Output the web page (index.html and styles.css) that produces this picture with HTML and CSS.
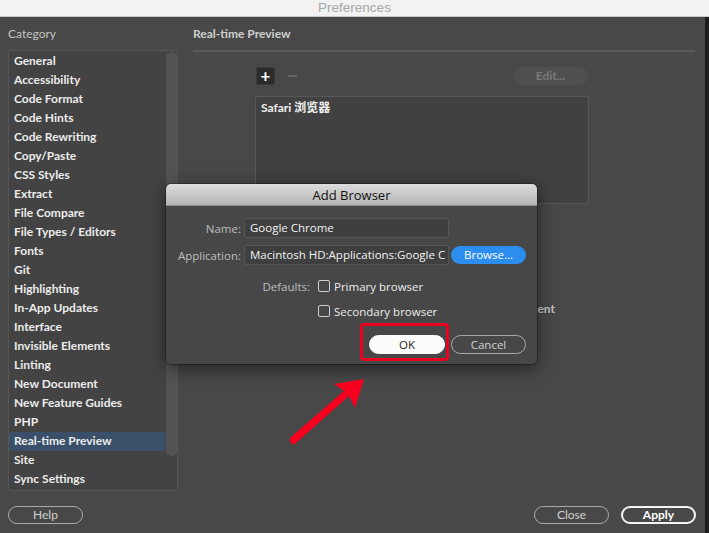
FILE: index.html
```html
<!DOCTYPE html>
<html>
<head>
<meta charset="utf-8">
<title>Preferences</title>
<link rel="stylesheet" href="styles.css">
</head>
<body>
<div class="window">
  <div class="titlebar">Preferences</div>
  <div class="content">
    <div class="main">
      <div class="sidebar">
        <div class="heading">Category</div>
        <div class="listbox">
          <ul class="cats">
            <li>General</li>
            <li>Accessibility</li>
            <li>Code Format</li>
            <li>Code Hints</li>
            <li>Code Rewriting</li>
            <li>Copy/Paste</li>
            <li>CSS Styles</li>
            <li>Extract</li>
            <li>File Compare</li>
            <li>File Types / Editors</li>
            <li>Fonts</li>
            <li>Git</li>
            <li>Highlighting</li>
            <li>In-App Updates</li>
            <li>Interface</li>
            <li>Invisible Elements</li>
            <li>Linting</li>
            <li>New Document</li>
            <li>New Feature Guides</li>
            <li>PHP</li>
            <li class="selected">Real-time Preview</li>
            <li>Site</li>
            <li>Sync Settings</li>
          </ul>
          <div class="scrollbar"></div>
        </div>
      </div>
      <div class="panel">
        <div class="heading">Real-time Preview</div>
        <div class="rule"></div>
        <div class="toolbar">
          <span class="btn-plus">+</span>
          <span class="btn-minus"></span>
          <span class="btn-edit">Edit...</span>
        </div>
        <div class="browsers">
          <div class="browser-item">Safari 浏览器</div>
        </div>
        <div class="hidden-row">current document</div>
      </div>
    </div>
    <div class="footer">
      <span class="pill">Help</span>
      <span class="spacer"></span>
      <span class="pill">Close</span>
      <span class="pill primary">Apply</span>
    </div>
  </div>

  <div class="dialog">
    <div class="dlg-title">Add Browser</div>
    <div class="dlg-body">
      <div class="form-row first">
        <span class="lbl">Name:</span>
        <span class="field">Google Chrome</span>
      </div>
      <div class="form-row">
        <span class="lbl">Application:</span>
        <span class="field">Macintosh HD:Applications:Google C</span>
        <span class="btn-browse">Browse...</span>
      </div>
      <div class="check-row first">
        <span class="lbl2">Defaults:</span>
        <span class="checkbox"></span>
        <span class="check-text">Primary browser</span>
      </div>
      <div class="check-row">
        <span class="lbl2"></span>
        <span class="checkbox"></span>
        <span class="check-text">Secondary browser</span>
      </div>
      <div class="dlg-buttons">
        <span class="dbtn ok">OK</span>
        <span class="dbtn cancel">Cancel</span>
      </div>
    </div>
  </div>

  <div class="highlight"></div>
  <svg class="arrow" width="90" height="80" viewBox="0 0 90 80">
    <path d="M76 1 L46 6 L56 13 L3 59 Q0 63 4 66 Q7 67 9 64 L61 18 L67 30 Z" fill="#f5001e"/>
  </svg>
</div>
</body>
</html>
```

FILE: styles.css
```css
* { box-sizing: border-box; }
html, body { margin: 0; padding: 0; }
body {
  width: 709px;
  height: 533px;
  overflow: hidden;
  background: #484848;
  font-family: "Lato", "Open Sans", sans-serif;
}
.window {
  position: relative;
  width: 709px;
  height: 533px;
  display: flex;
  flex-direction: column;
}
.titlebar {
  height: 17px;
  background: #f2f2f2;
  border-bottom: 1px solid #c9c9c9;
  color: #a6a6a6;
  font-family: "Liberation Sans", Arial, sans-serif;
  font-size: 13.5px;
  line-height: 15px;
  text-align: center;
  flex: none;
}
.content {
  flex: 1;
  display: flex;
  flex-direction: column;
  border-right: 4px solid #1c1c1c;
  background: #484848;
}
.main {
  display: flex;
  flex: 1;
}
.heading {
  color: #c4c4c4;
  font-size: 12px;
  line-height: 16px;
  padding-top: 9px;
  height: 33px;
}
.sidebar {
  width: 193px;
  flex: none;
  padding-left: 8px;
}
.listbox {
  position: relative;
  width: 170px;
  height: 441px;
  background: #434343;
  border: 1px solid #565656;
  border-radius: 2px;
  padding-top: 1px;
}
.cats {
  list-style: none;
  margin: 0;
  padding: 0;
  width: 156px;
}
.cats li {
  height: 19px;
  line-height: 18px;
  padding-left: 5px;
  color: #ececec;
  font-size: 12px;
  font-weight: 700;
  white-space: nowrap;
}
.cats li.selected {
  background: #3a5069;
}
.scrollbar {
  position: absolute;
  top: 1px;
  right: 0px;
  width: 11px;
  height: 404px;
  border-radius: 5px;
  background: #535353;
}
.panel {
  flex: 1;
  padding-right: 10px;
}
.panel .heading { font-weight: 700; color: #cfcfcf; }
.rule {
  height: 2px;
  background: #5a5a5a;
}
.toolbar {
  display: flex;
  align-items: center;
  height: 18px;
  margin-top: 15px;
  padding-left: 63px;
}
.btn-plus {
  width: 19px;
  height: 18px;
  background: #2b2b2b;
  border: 1px solid #3a3a3a;
  border-radius: 2px;
  color: #fff;
  font-weight: 700;
  font-size: 17px;
  line-height: 15px;
  text-align: center;
}
.btn-minus {
  width: 9px;
  height: 2px;
  background: #626262;
  margin-left: 13px;
}
.btn-edit {
  margin-left: auto;
  margin-right: 107px;
  width: 75px;
  height: 18px;
  border-radius: 9px;
  background: #4f4f4f;
  color: #7a7a7a;
  font-size: 12px;
  line-height: 18px;
  text-align: center;
  font-weight: 700;
}
.browsers {
  margin-top: 11px;
  margin-left: 62px;
  width: 334px;
  height: 108px;
  background: #414141;
  border: 1px solid #575757;
  border-radius: 2px;
  padding: 3px 5px;
}
.browser-item {
  color: #f0f0f0;
  font-size: 12px;
  font-weight: 700;
  line-height: 16px;
  font-family: "Lato", "Noto Sans CJK SC", sans-serif;
}
.hidden-row {
  width: 362px;
  text-align: right;
  margin-top: 98px;
  color: #c2c2c2;
  font-size: 12px;
  font-weight: 700;
  line-height: 14px;
}
.footer {
  height: 36px;
  flex: none;
  display: flex;
  align-items: flex-start;
  padding: 9px 9px 0 8px;
  gap: 12px;
}
.spacer { flex: 1; }
.pill {
  width: 75px;
  height: 18px;
  border: 1px solid #a9a9a9;
  border-radius: 9px;
  color: #d0d0d0;
  font-size: 12px;
  line-height: 16px;
  text-align: center;
}
.pill.primary {
  border: 2px solid #f4f4f4;
  color: #fff;
  font-weight: 700;
  line-height: 14px;
}

/* dialog */
.dialog {
  position: absolute;
  left: 166px;
  top: 184px;
  width: 371px;
  height: 180px;
  border-radius: 5px;
  background: #474747;
  box-shadow: 0 4px 18px rgba(0,0,0,0.55), 0 0 0 1px rgba(0,0,0,0.25);
  overflow: hidden;
  font-family: "Open Sans", "DejaVu Sans", sans-serif;
}
.dlg-title {
  height: 22px;
  background: linear-gradient(#dcdcdc, #b4b4b4);
  border-bottom: 1px solid #8a8a8a;
  color: #111;
  font-size: 13px;
  line-height: 23px;
  text-align: center;
}
.form-row {
  display: flex;
  align-items: center;
  height: 20px;
  margin-top: 7px;
}
.form-row.first { margin-top: 12px; }
.lbl {
  width: 75px;
  text-align: right;
  color: #bdbdbd;
  font-size: 11.5px;
  margin-right: 3px;
}
.field {
  width: 205px;
  height: 20px;
  background: #3f3f3f;
  border: 1px solid #565656;
  border-radius: 2px;
  color: #f2f2f2;
  font-size: 11.5px;
  line-height: 18px;
  padding-left: 5px;
  overflow: hidden;
  white-space: nowrap;
}
.btn-browse {
  margin-left: 2px;
  width: 75px;
  height: 18px;
  border-radius: 9px;
  background: #2b8ded;
  color: #fff;
  font-size: 11.5px;
  line-height: 18px;
  text-align: center;
}
.check-row {
  display: flex;
  align-items: center;
  height: 14px;
  margin-top: 11px;
}
.check-row.first { margin-top: 14px; }
.lbl2 {
  width: 144px;
  text-align: right;
  color: #bdbdbd;
  font-size: 11.5px;
  margin-right: 8px;
}
.checkbox {
  width: 12px;
  height: 12px;
  border: 1px solid #cfcfcf;
  border-radius: 2px;
  background: #474747;
}
.check-text {
  margin-left: 4px;
  color: #ececec;
  font-size: 11.5px;
}
.dlg-buttons {
  display: flex;
  justify-content: flex-end;
  gap: 6px;
  padding-right: 11px;
  margin-top: 17px;
}
.dbtn {
  height: 19px;
  border-radius: 10px;
  font-size: 11.5px;
  line-height: 17px;
  text-align: center;
}
.dbtn.ok {
  width: 76px;
  background: #fbfbfb;
  border: 1px solid #fbfbfb;
  color: #222;
}
.dbtn.cancel {
  width: 75px;
  border: 1px solid #a9a9a9;
  color: #d2d2d2;
}
.highlight {
  position: absolute;
  left: 360px;
  top: 323px;
  width: 89px;
  height: 38px;
  border: 3px solid #ea0020;
  border-radius: 4px;
}
.arrow {
  position: absolute;
  left: 288px;
  top: 378px;
}
```
